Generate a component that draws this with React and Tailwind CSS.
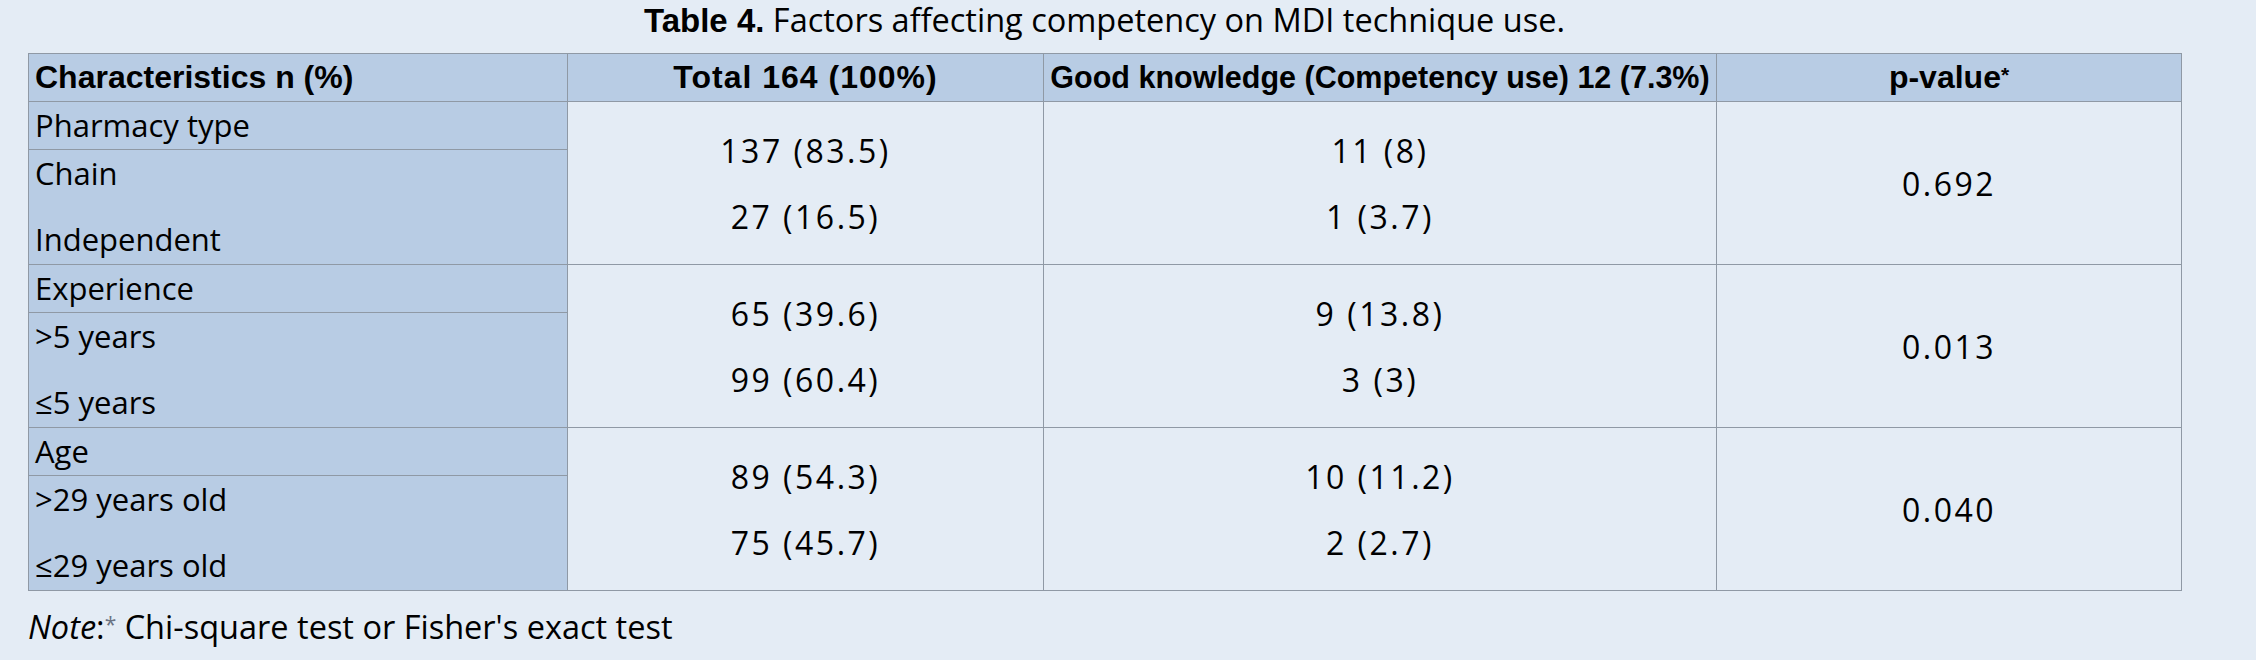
import React from 'react';

const groups = [
  { label: 'Pharmacy type', sub: ['Chain', 'Independent'], total: ['137 (83.5)', '27 (16.5)'], good: ['11 (8)', '1 (3.7)'], p: '0.692' },
  { label: 'Experience', sub: ['>5 years', '≤5 years'], total: ['65 (39.6)', '99 (60.4)'], good: ['9 (13.8)', '3 (3)'], p: '0.013' },
  { label: 'Age', sub: ['>29 years old', '≤29 years old'], total: ['89 (54.3)', '75 (45.7)'], good: ['10 (11.2)', '2 (2.7)'], p: '0.040' },
];

function TwoLines({ a, b }) {
  return (
    <div className="flex flex-col items-center text-[32px] leading-[33px] tracking-[2.5px]">
      <span>{a}</span>
      <span className="h-[33px]" />
      <span>{b}</span>
    </div>
  );
}

export default function App() {
  return (
    <div className="min-h-[660px] w-[2256px] bg-[#e4ecf5] text-black font-['Open_Sans',sans-serif] text-[31px]">
      <div className="ml-[28px] w-[2153px]">
        <div className="h-[53px] text-center text-[32.5px] leading-[40px]">
          <span className="font-bold font-['Liberation_Sans',sans-serif] text-[33px]">Table 4.</span> Factors affecting competency on MDI technique use.
        </div>
        <table className="w-[2153px] table-fixed border-collapse">
          <colgroup>
            <col className="w-[539px]" />
            <col className="w-[476px]" />
            <col className="w-[673px]" />
            <col className="w-[465px]" />
          </colgroup>
          <thead>
            <tr className="h-[48px] bg-[#b8cce4] font-bold leading-[33px] font-['Liberation_Sans',sans-serif] whitespace-nowrap">
              <th className="border border-[#8f99a5] px-[6px] text-left align-middle text-[32px]">Characteristics n (%)</th>
              <th className="border border-[#8f99a5] text-center align-middle text-[32px] tracking-[1px]">Total 164 (100%)</th>
              <th className="border border-[#8f99a5] text-center align-middle text-[30.5px]">Good knowledge (Competency use) 12 (7.3%)</th>
              <th className="border border-[#8f99a5] text-center align-middle text-[32px]">
                p-value<sup className="relative -top-[6px] text-[21px]">*</sup>
              </th>
            </tr>
          </thead>
          <tbody>
            {groups.map((g) => (
              <React.Fragment key={g.label}>
                <tr className="h-[48px]">
                  <td className="border border-[#8f99a5] bg-[#b8cce4] px-[6px] pt-[7px] align-top leading-[33px]">{g.label}</td>
                  <td rowSpan={2} className="border border-[#8f99a5] text-center align-middle">
                    <TwoLines a={g.total[0]} b={g.total[1]} />
                  </td>
                  <td rowSpan={2} className="border border-[#8f99a5] text-center align-middle">
                    <TwoLines a={g.good[0]} b={g.good[1]} />
                  </td>
                  <td rowSpan={2} className="border border-[#8f99a5] text-center align-middle text-[32px] leading-[33px] tracking-[2.5px]">{g.p}</td>
                </tr>
                <tr className="h-[115px]">
                  <td className="border border-[#8f99a5] bg-[#b8cce4] px-[6px] pt-[7px] align-top leading-[33px]">
                    <div className="flex flex-col">
                      <span>{g.sub[0]}</span>
                      <span className="h-[33px]" />
                      <span>{g.sub[1]}</span>
                    </div>
                  </td>
                </tr>
              </React.Fragment>
            ))}
          </tbody>
        </table>
        <div className="mt-[16px] text-[32.5px] leading-[40px]">
          <i>Note</i>:<sup className="relative -top-[7px] text-[21px] text-gray-500">*</sup> Chi-square test or Fisher&apos;s exact test
        </div>
      </div>
    </div>
  );
}
